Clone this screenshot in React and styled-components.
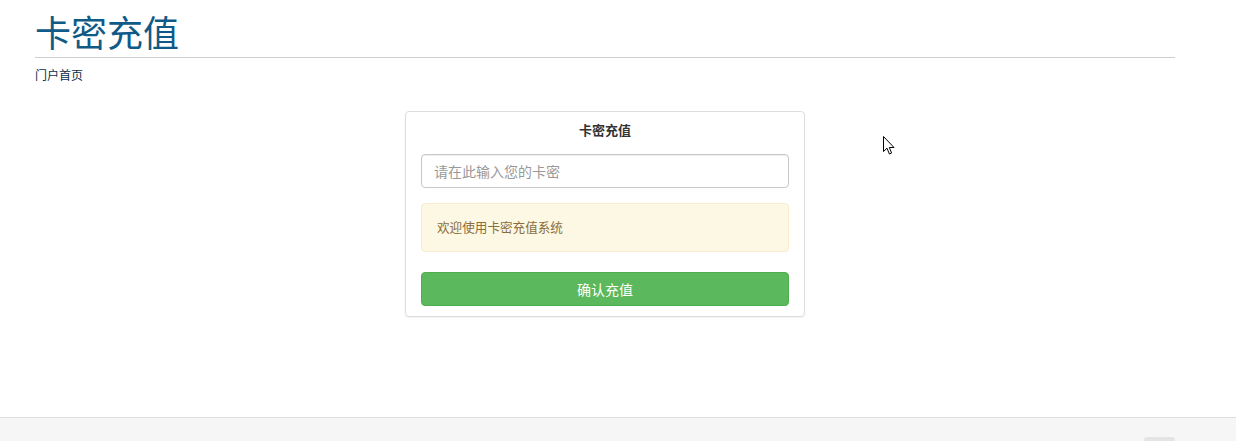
import React from "react";
import styled, { createGlobalStyle } from "styled-components";

const Global = createGlobalStyle`
  html, body { margin: 0; padding: 0; background: #fff; }
  body { font-family: "Liberation Sans", "Noto Sans CJK SC", sans-serif; font-size: 13px; color: #333; }
  #root { min-height: 441px; }
  * { box-sizing: border-box; }
`;

const Page = styled.div`
  position: relative;
  height: 441px;
  display: flex;
  flex-direction: column;
  overflow: hidden;
`;

const Main = styled.div`
  flex: 1;
  padding-left: 35px;
  width: 1175px;
`;

const Title = styled.h1`
  margin: 0;
  padding-top: 8px;
  font-size: 36px;
  font-weight: normal;
  line-height: 46px;
  color: #0f5a87;
  font-family: "Noto Sans CJK SC", sans-serif;
  border-bottom: 1px solid #cfcfcf;
  height: 58px;
`;

const Crumb = styled.a`
  display: block;
  margin-top: 8px;
  font-size: 12px;
  line-height: 18px;
  color: #0b2e4a;
  text-decoration: none;
  font-family: "Noto Sans CJK SC", sans-serif;
`;

const CardRow = styled.div`
  display: flex;
  justify-content: center;
  margin-top: 27px;
`;

const Card = styled.div`
  width: 400px;
  border: 1px solid #ddd;
  border-radius: 4px;
  box-shadow: 0 1px 2px rgba(0, 0, 0, 0.06);
  padding: 8px 15px 10px;
  display: flex;
  flex-direction: column;
`;

const CardTitle = styled.div`
  text-align: center;
  font-weight: bold;
  font-size: 13px;
  line-height: 20px;
  color: #333;
  font-family: "Noto Sans CJK SC", sans-serif;
`;

const Input = styled.input`
  margin-top: 14px;
  height: 34px;
  width: 100%;
  border: 1px solid #c8c8c8;
  border-radius: 4px;
  padding: 0 12px;
  font-size: 14px;
  font-family: "Noto Sans CJK SC", sans-serif;
  color: #555;
  box-shadow: inset 0 1px 1px rgba(0, 0, 0, 0.075);
  outline: none;
  &::placeholder { color: #999; }
`;

const Alert = styled.div`
  margin-top: 15px;
  height: 49px;
  background: #fcf8e3;
  border: 1px solid #faebcc;
  border-radius: 4px;
  color: #8a6d3b;
  padding: 0 15px 3px;
  display: flex;
  align-items: center;
  font-size: 12.6px;
  font-family: "Noto Sans CJK SC", sans-serif;
`;

const Button = styled.button`
  margin-top: 20px;
  height: 34px;
  width: 100%;
  background: #5cb85c;
  border: 1px solid #4cae4c;
  border-radius: 4px;
  color: #fff;
  font-size: 14px;
  font-family: "Noto Sans CJK SC", sans-serif;
  cursor: pointer;
`;

const Footer = styled.div`
  height: 24px;
  border-top: 1px solid #ddd;
  background: #f6f6f6;
  display: flex;
  justify-content: flex-end;
  align-items: flex-end;
  padding-right: 61px;
`;

const TopTab = styled.div`
  width: 31px;
  height: 4px;
  background: #e4e4e4;
  border-radius: 3px 3px 0 0;
`;

const Pointer = styled.svg`
  position: absolute;
  left: 883px;
  top: 136px;
`;

export default function App() {
  return (
    <>
      <Global />
      <Page>
        <Main>
          <Title>卡密充值</Title>
          <Crumb href="#">门户首页</Crumb>
          <CardRow>
            <Card>
              <CardTitle>卡密充值</CardTitle>
              <Input placeholder="请在此输入您的卡密" />
              <Alert>欢迎使用卡密充值系统</Alert>
              <Button>确认充值</Button>
            </Card>
          </CardRow>
        </Main>
        <Footer>
          <TopTab />
        </Footer>
        <Pointer width="13" height="20" viewBox="0 0 13 20">
          <path d="M0.5 0.5 L0.5 15.5 L4 12.2 L6.4 18 L8.6 17 L6.3 11.5 L11 11.5 Z" fill="#fff" stroke="#000" strokeWidth="1" strokeLinejoin="miter" />
        </Pointer>
      </Page>
    </>
  );
}
